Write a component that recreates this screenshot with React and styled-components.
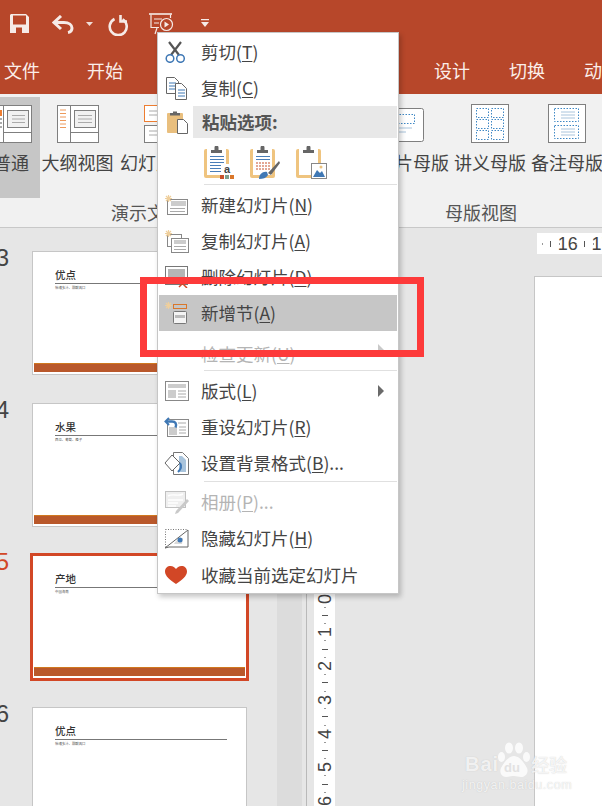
import React from 'react';
import styled, { createGlobalStyle } from 'styled-components';

const CJK = '"Noto Sans CJK SC", "Liberation Sans", sans-serif';

const GlobalStyle = createGlobalStyle`
  html, body { margin: 0; padding: 0; background: #e6e6e6; overflow: hidden; }
  * { box-sizing: border-box; }
`;

const Page = styled.div`
  position: relative; width: 602px; height: 806px; overflow: hidden;
  display: flex; flex-direction: column; font-family: ${CJK}; color: #444;
`;
const TitleBar = styled.header`
  flex: 0 0 94px; background: #b7472a; display: flex; flex-direction: column;
`;
const Qat = styled.div`
  flex: 0 0 48px; display: flex; align-items: flex-start; padding: 13px 0 0 10px;
`;
const QatIcon = styled.svg`
  flex: none; display: block; margin-left: ${p => p.$gap || 0}px; margin-top: ${p => p.$top || 0}px;
`;
const TabBar = styled.nav`
  flex: 1; display: flex; align-items: center; padding: 0 0 2px 4px; white-space: nowrap;
`;
const Tab = styled.span`
  flex: none; width: ${p => p.$w}px; color: #fbeee9; font-size: 18px; line-height: 24px;
`;
const Ribbon = styled.section`
  flex: 0 0 134px; background: #f1f1f1; border-bottom: 1px solid #c8c8c8;
  display: flex; gap: 11px; padding-top: 3px; margin-left: -18px;
`;
const Group = styled.div`
  flex: none; width: ${p => p.$w}px; display: flex; flex-direction: column; align-items: stretch;
`;
const GroupButtons = styled.div`
  height: 101px; display: flex; gap: ${p => p.$gap || 0}px;
`;
const ViewButton = styled.div`
  flex: none; width: ${p => p.$w ? p.$w + 'px' : 'auto'}; height: 101px; padding-top: 7px;
  background: ${p => p.$on ? '#c6c6c6' : 'transparent'};
  display: flex; flex-direction: column; align-items: ${p => p.$start ? 'flex-start' : 'center'};
  font-size: 18px; line-height: 24px; white-space: nowrap; color: #444;
`;
const IconSlot = styled.div`
  flex: 0 0 39px; margin-bottom: 7px; display: flex; align-items: flex-end;
  margin-left: ${p => p.$left || 0}px;
`;
const ButtonIcon = styled.svg`
  display: block; flex: none;
`;
const GroupLabel = styled.div`
  margin-top: 2px; text-align: center; font-size: 18px; line-height: 24px; color: #555;
`;
const NormalLabel = styled.span`
  margin-left: 11px;
`;
const Workspace = styled.main`
  flex: 1; min-height: 0; display: flex; background: #e6e6e6;
`;
const SlidePanel = styled.div`
  flex: 0 0 277px; padding-top: 23px; display: flex; flex-direction: column; gap: 28px;
`;
const SlideRow = styled.div`
  display: flex; gap: 23px; flex: none;
`;
const SlideNum = styled.div`
  flex: 0 0 9px; min-width: 0; margin-top: -3px; display: flex; justify-content: flex-end;
  font-family: "Liberation Sans", sans-serif;
  font-size: 24px; line-height: 20px; color: ${p => p.$on ? '#d24726' : '#444'};
`;
const Thumb = styled.div`
  flex: none; width: 215px; height: 124px; background: #fff; border: 1px solid #c6c6c6;
  outline: ${p => p.$on ? '3px solid #d24726' : 'none'}; outline-offset: -1px;
  display: flex; flex-direction: column; padding: 0 1px 2px;
  border-color: ${p => p.$on ? '#fff' : '#c6c6c6'};
`;
const ThumbBody = styled.div`
  flex: 1; padding: 15px 18px 0 21px;
`;
const ThumbTitle = styled.div`
  font-size: 10.5px; line-height: 15px; font-weight: 500; color: #333;
  border-bottom: 1px solid #777; padding-bottom: 1px;
`;
const ThumbSub = styled.div`
  font-size: 3.4px; line-height: 6px; color: #555; margin-top: 1px;
`;
const ThumbFooter = styled.div`
  flex: 0 0 9px; background: #b9582b; border-top: 1px solid #d0781f;
`;
const ScrollStrip = styled.div`
  flex: 0 0 25px; background: #dcdcdc;
`;
const Divider = styled.div`
  flex: 0 0 1px; margin-left: 4px; background: #b9b9b9;
`;
const VRuler = styled.div`
  flex: 0 0 21px; margin-left: 7px; margin-top: 48px; padding-top: 14.6px; background: #fff;
  display: flex; flex-direction: column; align-items: center;
`;
const VSlot = styled.div`
  flex: 0 0 8.45px; min-height: 0; width: 100%; display: flex; align-items: center; justify-content: center;
`;
const VDigit = styled.span`
  writing-mode: vertical-rl; transform: rotate(180deg); font-family: "Liberation Sans", sans-serif;
  font-size: 18px; line-height: 18px; color: #444;
`;
const VTick = styled.i`
  display: block; height: 1px; width: ${p => p.$major ? 6 : 2}px; background: ${p => p.$major ? '#555' : '#999'};
`;
const Canvas = styled.div`
  flex: 1; min-width: 0; padding-top: 5px; display: flex; flex-direction: column;
`;
const HRuler = styled.div`
  flex: 0 0 21px; margin-left: 202px; padding-left: 1.3px; background: #fff; display: flex; align-items: center; overflow: hidden;
`;
const HSlot = styled.div`
  flex: 0 0 8.45px; min-width: 0; height: 100%; display: flex; align-items: center; justify-content: center;
`;
const HDigit = styled.span`
  font-family: "Liberation Sans", sans-serif; font-size: 18px; line-height: 18px; color: #444; white-space: nowrap;
`;
const HTick = styled.i`
  display: block; width: 1px; height: ${p => p.$major ? 6 : 2}px; background: ${p => p.$major ? '#555' : '#999'};
`;
const MainSlide = styled.div`
  flex: 1; margin: 22px 0 0 199px; background: #fff; border: 1px solid #c6c6c6; border-right: 0; border-bottom: 0;
`;
const Menu = styled.div`
  position: absolute; left: 157px; top: 32px; width: 242px; height: 562px; background: #fff;
  border: 1px solid #c6c6c6; padding: 1px 1px 0; box-shadow: 2px 3px 5px rgba(0,0,0,.22);
  display: flex; flex-direction: column;
`;
const Item = styled.div`
  flex: 0 0 ${p => p.$h || 36}px; display: flex; align-items: center; position: relative;
  padding: ${p => p.$drop ? '6px 0 0' : '0 0 2px'};
  background: ${p => p.$hover ? '#c6c6c6' : 'transparent'};
  color: ${p => p.$off ? '#b4b4b4' : '#444'}; font-size: 17.5px; white-space: nowrap;
`;
const ItemIcon = styled.svg`
  flex: none; display: block; margin: 2px ${p => 42 - p.$w - (p.$l || 4)}px 0 ${p => p.$l || 4}px;
  opacity: ${p => p.$off ? 0.45 : 1};
`;
const U = styled.span`text-decoration: underline; text-underline-offset: 2px;`;
const Arrow = styled.i`
  position: absolute; right: 13px; top: 50%; margin-top: -6px; width: 0; height: 0;
  border-left: 6px solid ${p => p.$off ? '#c9c9c9' : '#6a6a6a'}; border-top: 6px solid transparent; border-bottom: 6px solid transparent;
`;
const PasteHeader = styled.div`
  flex: 0 0 32px; display: flex; align-items: center; position: relative;
`;
const PasteTitle = styled.div`
  flex: 1; align-self: stretch; margin-left: 34px; padding-left: 9px; background: #e8e8e8;
  font-size: 17.5px; font-weight: 700; line-height: 31px; color: #555;
`;
const PasteRow = styled.div`
  flex: 0 0 46px; display: flex; gap: 15px; padding: 8px 0 0 45px;
`;
const PasteIcon = styled.svg`
  display: block; flex: none;
`;
const Sep = styled.div`
  flex: 0 0 1px; margin: ${p => p.$m || '0 0 2px'}; margin-left: 45px; background: #e0e0e0;
`;
const BigPaste = styled.svg`
  position: absolute; left: 8px; top: 5px; display: block;
`;
const Callout = styled.div`
  position: absolute; left: 140px; top: 277px; width: 284px; height: 80px; border: 7px solid #fd3a3a;
`;
const Watermark = styled.div`
  position: absolute; left: 462px; top: 741px; width: 108px; height: 50px; color: rgba(255,255,255,.8);
  font-family: "Liberation Sans", sans-serif; text-shadow: 0 0 1px rgba(150,150,150,.5);
`;
const WmLine = styled.div`
  display: flex; align-items: center; height: 32px; font-weight: 700; font-size: 20px; letter-spacing: 1px;
  padding: 14px 0 0 3px;
`;
const WmCn = styled.span`
  font-family: ${CJK}; font-size: 18px; margin-left: 32px; letter-spacing: 0; font-weight: 500;
`;
const WmDu = styled.span`
  position: absolute; left: 42px; top: 19px; font-size: 13px; color: #e2e2e2; text-shadow: none; font-weight: 700;
`;
const WmPaw = styled.svg`
  position: absolute; left: 36px; top: 1px; display: block;
`;
const WmUrl = styled.div`
  font-size: 12.5px; line-height: 16px; letter-spacing: .55px; font-weight: 400; white-space: nowrap; margin-top: 4px;
`;

const stroke = '#7f7f7f';
const qat = '#f6ebe7';

const SaveIcon = () => (
  <QatIcon width="19" height="19" viewBox="0 0 19 19" $top={1}>
    <path fill={qat} fillRule="evenodd" d="M1 0h15l3 3v16H0V1zM3 1.500v9h13v-9zM6 13.500V19h6v-5.500z" />
  </QatIcon>
);
const UndoIcon = () => (
  <QatIcon width="22" height="19" viewBox="0 0 22 19" $gap={23} $top={2} fill="none" stroke={qat} strokeWidth="3">
    <path d="M9 1 2 7.500 9 14" /><path d="M3 7.500h9c5 0 8 2.500 8 5.500 0 2.500-1.500 4-4 4.500" />
  </QatIcon>
);
const Caret = ({ gap, top }) => (
  <QatIcon width="7" height="5" viewBox="0 0 7 5" $gap={gap} $top={top}><path d="M0 0h7L3.500 4z" fill="#f0ddd7" /></QatIcon>
);
const RedoIcon = () => (
  <QatIcon width="21" height="21" viewBox="0 0 21 21" $gap={15} $top={2} fill="none" stroke={qat} strokeWidth="2.600">
    <path d="M6.500 4a8.500 8.500 0 1 0 8 .3" /><path d="M12.500 0v6.500H19" />
  </QatIcon>
);
const ShowIcon = () => (
  <QatIcon width="25" height="22" viewBox="0 0 25 22" $gap={20} fill="none" stroke={qat} strokeWidth="1.200">
    <path d="M0 1h23" strokeWidth="1.600" /><path d="M2 1.500v13h8" /><path d="M21.500 1.500V5" /><path d="M6 21l2-6" /><path d="M5 6h8M5 10h5" />
    <circle cx="17.500" cy="11.500" r="6" /><path d="M15.500 8.500v6l4.500-3z" fill={qat} stroke="none" />
  </QatIcon>
);
const CustomCaret = () => (
  <QatIcon width="9" height="9" viewBox="0 0 9 9" $gap={27} $top={6}>
    <path d="M0 0h8v1.300H0zM0 3h8L4 8z" fill={qat} />
  </QatIcon>
);

const NormalIcon = () => (
  <ButtonIcon width="43" height="38" viewBox="0 0 43 38">
    <rect x=".5" y=".5" width="42" height="37" fill="#fff" stroke={stroke} />
    <path d="M14.500 1v36M14.500 27.500h28" stroke={stroke} />
    <rect x="9" y="5" width="4" height="6" fill="#ed7d31" />
    <path d="M9 14h4M9 18h4M9 22h4" stroke="#aaa" strokeWidth="2" />
    <rect x="18.500" y="5.500" width="21" height="17" fill="#f1f1f1" stroke={stroke} />
    <path d="M23 10.500h13M23 14h13M23 17.500h13" stroke="#aaa" />
  </ButtonIcon>
);
const OutlineIcon = () => (
  <ButtonIcon width="42" height="38" viewBox="0 0 42 38">
    <rect x=".5" y=".5" width="41" height="37" fill="#fff" stroke={stroke} />
    <path d="M13.500 1v36M13.500 27.500h28" stroke={stroke} />
    <path d="M3 5h7M3 8.500h7M3 12h7M3 15.500h7M3 19h7M3 22.500h7" stroke="#ed9a5c" strokeDasharray="6 1" />
    <rect x="17.500" y="5.500" width="21" height="17" fill="#f1f1f1" stroke={stroke} />
    <path d="M21 10.500h14M21 14h14M21 17.500h14" stroke="#aaa" />
  </ButtonIcon>
);
const SorterIcon = () => (
  <ButtonIcon width="42" height="38" viewBox="0 0 42 38">
    <rect x=".5" y=".5" width="19" height="16" fill="#fff" stroke="#ed7d31" />
    <rect x=".5" y="20.500" width="19" height="17" fill="#fff" stroke={stroke} />
    <rect x="22.500" y=".5" width="19" height="16" fill="#fff" stroke={stroke} />
    <rect x="22.500" y="20.500" width="19" height="17" fill="#fff" stroke={stroke} />
    <path d="M5 6h11M5 10h11M5 26h11M5 30h11" stroke="#aaa" />
  </ButtonIcon>
);
const SlideMasterIcon = () => (
  <ButtonIcon width="40" height="35" viewBox="0 0 40 35">
    <rect x=".5" y=".5" width="39" height="33" rx="2" fill="#fff" stroke={stroke} />
    <rect x="6.500" y="6.500" width="24" height="9" fill="none" stroke="#3f88c5" strokeDasharray="1.500 1.500" />
    <path d="M6 20h22M6 24h16" stroke="#a9c4dc" />
  </ButtonIcon>
);
const HandoutIcon = () => (
  <ButtonIcon width="38" height="39" viewBox="0 0 38 39">
    <rect x=".5" y=".5" width="37" height="38" fill="#fff" stroke={stroke} />
    <g fill="none" stroke="#3f88c5" strokeDasharray="1.500 1.500">
      <rect x="5.500" y="4.500" width="12" height="9" /><rect x="20.500" y="4.500" width="12" height="9" />
      <rect x="5.500" y="15.500" width="12" height="9" /><rect x="20.500" y="15.500" width="12" height="9" />
      <rect x="5.500" y="26.500" width="12" height="9" /><rect x="20.500" y="26.500" width="12" height="9" />
    </g>
  </ButtonIcon>
);
const NotesIcon = () => (
  <ButtonIcon width="38" height="39" viewBox="0 0 38 39">
    <rect x=".5" y=".5" width="37" height="38" fill="#fff" stroke={stroke} />
    <g fill="none" stroke="#3f88c5" strokeDasharray="1.500 1.500">
      <rect x="6.500" y="4.500" width="24" height="13" /><rect x="6.500" y="21.500" width="24" height="13" />
    </g>
    <path d="M13 8h14M13 11h14M13 14h14M13 25h14M13 28h14M13 31h14" stroke="#a9c4dc" />
  </ButtonIcon>
);

const Scissors = () => (
  <ItemIcon $w={21} $l={6} width="21" height="22" viewBox="0 0 21 22" fill="none">
    <path d="M4 1l10 13M16 1 6 14" stroke="#555" strokeWidth="2.200" />
    <circle cx="5" cy="17.500" r="3.800" stroke="#3f78b5" strokeWidth="1.500" />
    <circle cx="15.500" cy="17.500" r="3.800" stroke="#3f78b5" strokeWidth="1.500" />
  </ItemIcon>
);
const CopyIcon = () => (
  <ItemIcon $w={21} $l={7} width="21" height="23" viewBox="0 0 21 23" fill="#fff">
    <path d="M.5.500h8l4 4v12H.5z" stroke="#666" /><path d="M3 6h7M3 9h7M3 12h7" stroke="#3f78b5" />
    <path d="M9.500 6.500h6l5 5v11h-11z" stroke="#666" /><path d="M12 13h7M12 16h7M12 19h7" stroke="#3f78b5" />
  </ItemIcon>
);
const ClipBase = () => (
  <>
    <rect x="0" y="3" width="25" height="29" rx="2" fill="#efc47f" />
    <rect x="3" y="3" width="19" height="26" fill="#fff" />
    <path d="M7 7V4h3.500V1.500a2 2 0 0 1 4 0V4H18v3z" fill="#666" />
  </>
);
const PasteText = () => (
  <PasteIcon width="31" height="33" viewBox="0 0 31 33">
    <ClipBase />
    <path d="M6 10.500h14M6 13.500h14M6 16.500h14M6 19.500h14M6 22.500h14M6 25.500h14" stroke="#4a7eb8" />
    <rect x="17" y="18" width="14" height="15" fill="#fff" />
    <text x="20" y="27" fontFamily="Liberation Sans" fontSize="11" fontWeight="700" fill="#444">a</text>
    <rect x="16" y="29" width="4" height="4" fill="#c8502a" /><rect x="21" y="29" width="4" height="4" fill="#7fa08e" /><rect x="26" y="29" width="4" height="4" fill="#d9772b" />
  </PasteIcon>
);
const PasteFormat = () => (
  <PasteIcon width="31" height="33" viewBox="0 0 31 33">
    <ClipBase />
    <path d="M6 10.500h14M6 13.500h14" stroke="#4a7eb8" /><path d="M6 17h14M6 20h14M6 23h14" stroke="#c8502a" strokeDasharray="2 1" />
    <path d="M9 33c0-5 4-8 8-7l1 3c-2 3-5 4-9 4z" fill="#3f78b5" /><path d="M18 27l11-12 1 2-9 12z" fill="#666" />
  </PasteIcon>
);
const PastePicture = () => (
  <PasteIcon width="31" height="33" viewBox="0 0 31 33">
    <ClipBase />
    <rect x="15.500" y="17.500" width="15" height="15" fill="#fff" stroke="#888" />
    <path d="M17 31l4-7 3 3 2-2 3 6z" fill="#3f78b5" /><circle cx="25" cy="21" r="1.500" fill="#ecc27d" />
  </PasteIcon>
);
const Spark = ({ x = 0, y = 0 }) => (
  <path transform={`translate(${x} ${y})`} d="M0 3.500h7M3.500 0v7M1 1l5 5M6 1 1 6" stroke="#efcf9c" strokeWidth="1.200" fill="none" />
);
const NewSlide = () => (
  <ItemIcon $w={23} $l={6} width="23" height="21" viewBox="0 0 23 21" fill="none">
    <rect x="2.500" y="4.500" width="20" height="15" fill="#fff" stroke="#888" />
    <rect x="6" y="6" width="15" height="5" fill="#ccc" /><path d="M5 13.500h15M5 16.500h15" stroke="#aaa" />
    <Spark />
  </ItemIcon>
);
const DupSlide = () => (
  <ItemIcon $w={24} $l={6} width="24" height="23" viewBox="0 0 24 23" fill="none">
    <rect x="2.500" y="4.500" width="14" height="12" fill="#fff" stroke="#888" />
    <rect x="6.500" y="8.500" width="17" height="14" fill="#fff" stroke="#888" />
    <rect x="9" y="10" width="12" height="4" fill="#ccc" /><path d="M9 16.500h12M9 19.500h12" stroke="#aaa" />
    <Spark />
  </ItemIcon>
);
const DelSlide = () => (
  <ItemIcon $w={24} $l={6} width="24" height="22" viewBox="0 0 24 22" fill="none">
    <rect x=".5" y=".5" width="22" height="18" fill="#fff" stroke="#777" />
    <rect x="3" y="3" width="17" height="8" fill="#b5b5b5" />
    <path d="M14 14l8 8M22 13l-8 8" stroke="#d24726" strokeWidth="1.500" />
  </ItemIcon>
);
const NewSection = () => (
  <ItemIcon $w={23} $l={6} width="23" height="22" viewBox="0 0 23 22" fill="none">
    <rect x="8.500" y="2.500" width="13" height="4" stroke="#d9772b" />
    <rect x="8.500" y="9.500" width="13" height="12" rx="1" fill="#f4f4f4" stroke="#777" />
    <rect x="10" y="13" width="10" height="3" fill="#bbb" />
    <Spark />
  </ItemIcon>
);
const Blank = () => <ItemIcon $w={23} width="23" height="22" viewBox="0 0 23 22" />;
const LayoutIcon = () => (
  <ItemIcon $w={24} $l={6} width="24" height="20" viewBox="0 0 24 20" fill="none">
    <rect x=".5" y=".5" width="23" height="19" fill="#fff" stroke="#888" />
    <rect x="3" y="3" width="18" height="4" fill="#ccc" /><rect x="3" y="9" width="8" height="8" fill="#ccc" />
    <path d="M13 10h8M13 13h8M13 16h8" stroke="#aaa" />
  </ItemIcon>
);
const ResetIcon = () => (
  <ItemIcon $w={25} $l={5} width="25" height="21" viewBox="0 0 25 21" fill="none">
    <rect x="3.500" y="2.500" width="21" height="17" fill="#fff" stroke="#888" />
    <rect x="5" y="10" width="8" height="8" fill="#ccc" /><path d="M15 10h7M15 13h7M15 16h7M14 6h8" stroke="#aaa" />
    <path d="M5 1 1.500 4.500 5 8" stroke="#3f78b5" strokeWidth="2" />
    <path d="M2 4.500h6c3.500 0 5 2.500 3.500 6" stroke="#3f78b5" strokeWidth="2.400" />
  </ItemIcon>
);
const BgIcon = () => (
  <ItemIcon $w={25} $l={5} width="25" height="23" viewBox="0 0 25 23" fill="none">
    <path d="M9.500.500h9l6 6v16h-15z" fill="#fff" stroke="#777" />
    <path d="M15 4h3l4 4v12h-7z" fill="#a9c4dc" />
    <path d="M8 3 1 11l7 8 8-8z" fill="#fff" stroke="#666" />
    <path d="M14 20c3-3 4-6 2-9" stroke="#3f78b5" strokeWidth="2" />
  </ItemIcon>
);
const AlbumIcon = () => (
  <ItemIcon $w={24} $l={6} $off width="24" height="23" viewBox="0 0 24 23" fill="none">
    <rect x=".5" y=".5" width="20" height="16" fill="#ddd" stroke="#777" />
    <path d="M3 5c5-3 10 1 15-2M3 9h15M3 12h10M3 15h8" stroke="#fff" strokeWidth="1.500" />
    <path d="M11 20l11-12 2 2-11 12-3 1z" fill="#888" />
  </ItemIcon>
);
const HideIcon = () => (
  <ItemIcon $w={24} $l={6} width="24" height="20" viewBox="0 0 24 20" fill="none">
    <rect x=".5" y=".5" width="22" height="17" stroke="#777" strokeDasharray="1 1.500" />
    <path d="M0 19 23 1v17H4z" fill="#fff" stroke="#666" />
    <path d="M9 15c2-4 6-6 9-6l-1 6z" fill="#d9d9d9" /><circle cx="15" cy="11" r="2.500" fill="#3f78b5" />
  </ItemIcon>
);
const Heart = () => (
  <ItemIcon $w={22} $l={6} width="22" height="18" viewBox="0 0 22 18">
    <path d="M11 18C5 14 0 10 0 5.500 0 2 2.500 0 5.500 0 8 0 10 1.500 11 3c1-1.500 3-3 5.500-3C19.500 0 22 2 22 5.500 22 10 17 14 11 18z" fill="#d24726" />
  </ItemIcon>
);

const slides = [
  { n: 3, title: '优点', sub: '怡魂多汁、甜酣爽口' },
  { n: 4, title: '水果', sub: '西瓜、葡萄、橙子' },
  { n: 5, title: '产地', sub: '中国海南', on: true },
  { n: 6, title: '优点', sub: '怡魂多汁、甜酣爽口' },
];

const vSlots = Array.from({ length: 66 }, (_, i) => i - 36);
const hSlots = Array.from({ length: 8 }, (_, i) => i);

const Label = ({ text, k, tail }) => <span>{text}(<U>{k}</U>){tail}</span>;

export default function App() {
  return (
    <Page>
      <GlobalStyle />
      <TitleBar>
        <Qat>
          <SaveIcon /><UndoIcon /><Caret gap={12} top={9} /><RedoIcon /><ShowIcon /><CustomCaret />
        </Qat>
        <TabBar>
          <Tab $w={83}>文件</Tab><Tab $w={347}>开始</Tab><Tab $w={75}>设计</Tab><Tab $w={75}>切换</Tab><Tab $w={36}>动画</Tab>
        </TabBar>
      </TitleBar>
      <Ribbon>
        <Group $w={366}>
          <GroupButtons>
            <ViewButton $w={58} $on $start><IconSlot $left={7}><NormalIcon /></IconSlot><NormalLabel>普通</NormalLabel></ViewButton>
            <ViewButton $w={75}><IconSlot><OutlineIcon /></IconSlot>大纲视图</ViewButton>
            <ViewButton $w={100}><IconSlot><SorterIcon /></IconSlot>幻灯片浏览</ViewButton>
          </GroupButtons>
          <GroupLabel>演示文稿视图</GroupLabel>
        </Group>
        <Group $w={244}>
          <GroupButtons $gap={5}>
            <ViewButton><IconSlot><SlideMasterIcon /></IconSlot>幻灯片母版</ViewButton>
            <ViewButton><IconSlot><HandoutIcon /></IconSlot>讲义母版</ViewButton>
            <ViewButton><IconSlot><NotesIcon /></IconSlot>备注母版</ViewButton>
          </GroupButtons>
          <GroupLabel>母版视图</GroupLabel>
        </Group>
      </Ribbon>
      <Workspace>
        <SlidePanel>
          {slides.map(s => (
            <SlideRow key={s.n}>
              <SlideNum $on={s.on}>{s.n}</SlideNum>
              <Thumb $on={s.on}>
                <ThumbBody>
                  <ThumbTitle>{s.title}</ThumbTitle>
                  <ThumbSub>{s.sub}</ThumbSub>
                </ThumbBody>
                <ThumbFooter />
              </Thumb>
            </SlideRow>
          ))}
        </SlidePanel>
        <ScrollStrip />
        <Divider />
        <VRuler>
          {vSlots.map(i => (
            <VSlot key={i}>
              {i % 4 === 0 ? <VDigit>{Math.abs(i) / 4}</VDigit> : <VTick $major={Math.abs(i) % 4 === 2} />}
            </VSlot>
          ))}
        </VRuler>
        <Canvas>
          <HRuler>
            {hSlots.map(i => (
              <HSlot key={i}>
                {i === 3 ? <HDigit>16</HDigit> : i === 7 ? <HDigit>17</HDigit> : <HTick $major={i === 1 || i === 5} />}
              </HSlot>
            ))}
          </HRuler>
          <MainSlide />
        </Canvas>
      </Workspace>

      <Menu>
        <Item><Scissors /><Label text="剪切" k="T" /></Item>
        <Item><CopyIcon /><Label text="复制" k="C" /></Item>
        <PasteHeader>
          <BigPaste width="22" height="23" viewBox="0 0 22 23">
            <path d="M0 3a1 1 0 0 1 1-1h14a1 1 0 0 1 1 1v19H1a1 1 0 0 1-1-1z" fill="#e9bf7e" />
            <path d="M3 4.500V2h3V.5h4V2h3v2.500z" fill="#666" />
            <path d="M10.500 8.500h6l4 4v10h-10z" fill="#fff" stroke="#666" />
          </BigPaste>
          <PasteTitle>粘贴选项:</PasteTitle>
        </PasteHeader>
        <PasteRow><PasteText /><PasteFormat /><PastePicture /></PasteRow>
        <Sep />
        <Item><NewSlide /><Label text="新建幻灯片" k="N" /></Item>
        <Item><DupSlide /><Label text="复制幻灯片" k="A" /></Item>
        <Item><DelSlide /><Label text="删除幻灯片" k="D" /></Item>
        <Item $hover><NewSection /><Label text="新增节" k="A" /></Item>
        <Item $off $drop $h={38}><Blank /><Label text="检查更新" k="U" /><Arrow $off /></Item>
        <Sep $m="1px 0 2px" />
        <Item><LayoutIcon /><Label text="版式" k="L" /><Arrow /></Item>
        <Item><ResetIcon /><Label text="重设幻灯片" k="R" /></Item>
        <Item><BgIcon /><Label text="设置背景格式" k="B" tail="..." /></Item>
        <Sep />
        <Item $off><AlbumIcon /><Label text="相册" k="P" tail="..." /></Item>
        <Item $h={37}><HideIcon /><Label text="隐藏幻灯片" k="H" /></Item>
        <Item><Heart /><span>收藏当前选定幻灯片</span></Item>
      </Menu>
      <Callout />
      <Watermark>
        <WmPaw width="32" height="35" viewBox="0 0 32 35" fill="currentColor">
          <ellipse cx="3.500" cy="15" rx="3.500" ry="5" /><ellipse cx="11" cy="6" rx="4" ry="5.500" /><ellipse cx="21" cy="6" rx="4" ry="5.500" /><ellipse cx="28.500" cy="15" rx="3.500" ry="5" />
          <path d="M16 14c5 0 10 6 13 12 2 5-2 9-6 9-3 0-4-1-7-1s-5 1-8 1c-4 0-7-4-5-9 3-6 8-12 13-12z" />
        </WmPaw>
        <WmDu>du</WmDu>
        <WmLine>Bai<WmCn>经验</WmCn></WmLine>
        <WmUrl>jingyan.baidu.com</WmUrl>
      </Watermark>
    </Page>
  );
}
